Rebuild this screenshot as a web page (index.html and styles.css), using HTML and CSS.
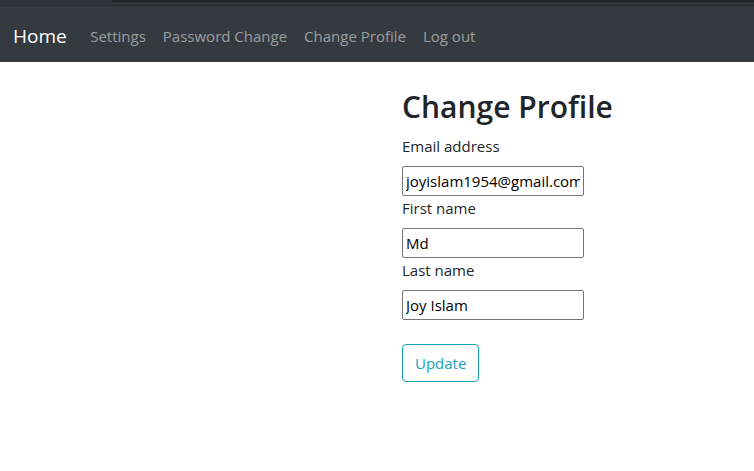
FILE: index.html
```html
<!DOCTYPE html>
<html lang="en">
<head>
<meta charset="utf-8">
<title>Change Profile</title>
<link rel="stylesheet" href="styles.css">
</head>
<body>
<div class="chrome"><div class="chrome-dark"></div></div>
<nav class="navbar">
  <a class="brand" href="#">Home</a>
  <ul class="nav">
    <li><a class="nav-link" href="#">Settings</a></li>
    <li><a class="nav-link" href="#">Password Change</a></li>
    <li><a class="nav-link" href="#">Change Profile</a></li>
    <li><a class="nav-link" href="#">Log out</a></li>
  </ul>
</nav>
<main class="content">
  <h2 class="title">Change Profile</h2>
  <form class="form">
    <label class="label" for="email">Email address</label>
    <input class="field" id="email" type="text" value="joyislam1954@gmail.com">
    <label class="label" for="first">First name</label>
    <input class="field" id="first" type="text" value="Md">
    <label class="label" for="last">Last name</label>
    <input class="field" id="last" type="text" value="Joy Islam">
    <button class="btn" type="button">Update</button>
  </form>
</main>
</body>
</html>
```
FILE: styles.css
```css
* { box-sizing: border-box; }
html, body { margin: 0; padding: 0; }
body {
  font-family: "Open Sans", "Noto Sans", sans-serif;
  font-size: 15px;
  line-height: 24px;
  color: #212529;
  background: #fff;
}
.chrome {
  height: 6px;
  background: #30353b;
  border-bottom: 1px solid #2a2e33;
}
.chrome-dark {
  margin-left: 112px;
  height: 2px;
  background: #222428;
}
.navbar {
  height: 56px;
  background: #343a40;
  display: flex;
  align-items: center;
  padding: 3px 16px 0 13px;
}
.brand {
  color: #fff;
  font-size: 19px;
  text-decoration: none;
  margin-right: 15px;
  line-height: 30px;
}
.nav {
  display: flex;
  list-style: none;
  margin: 0;
  padding: 0;
}
.nav-link {
  display: block;
  padding: 8px 8.5px;
  color: rgba(255,255,255,.5);
  text-decoration: none;
}
.content {
  padding: 26px 0 0 402px;
}
.title {
  margin: 0 0 8px;
  font-size: 30px;
  font-weight: 600;
  line-height: 38px;
}
.form {
  display: flex;
  flex-direction: column;
  align-items: flex-start;
}
.label {
  margin-bottom: 8px;
  line-height: 24px;
}
.field {
  width: 182px;
  height: 30px;
  padding: 1px 3px;
  border: 1px solid #767676;
  border-radius: 2px;
  font: inherit;
  color: #000;
}
.btn {
  margin-top: 24px;
  font: inherit;
  color: #17a2b8;
  background: transparent;
  border: 1px solid #17a2b8;
  border-radius: 4px;
  padding: 6px 12px;
  height: 38px;
  line-height: 24px;
}
```
